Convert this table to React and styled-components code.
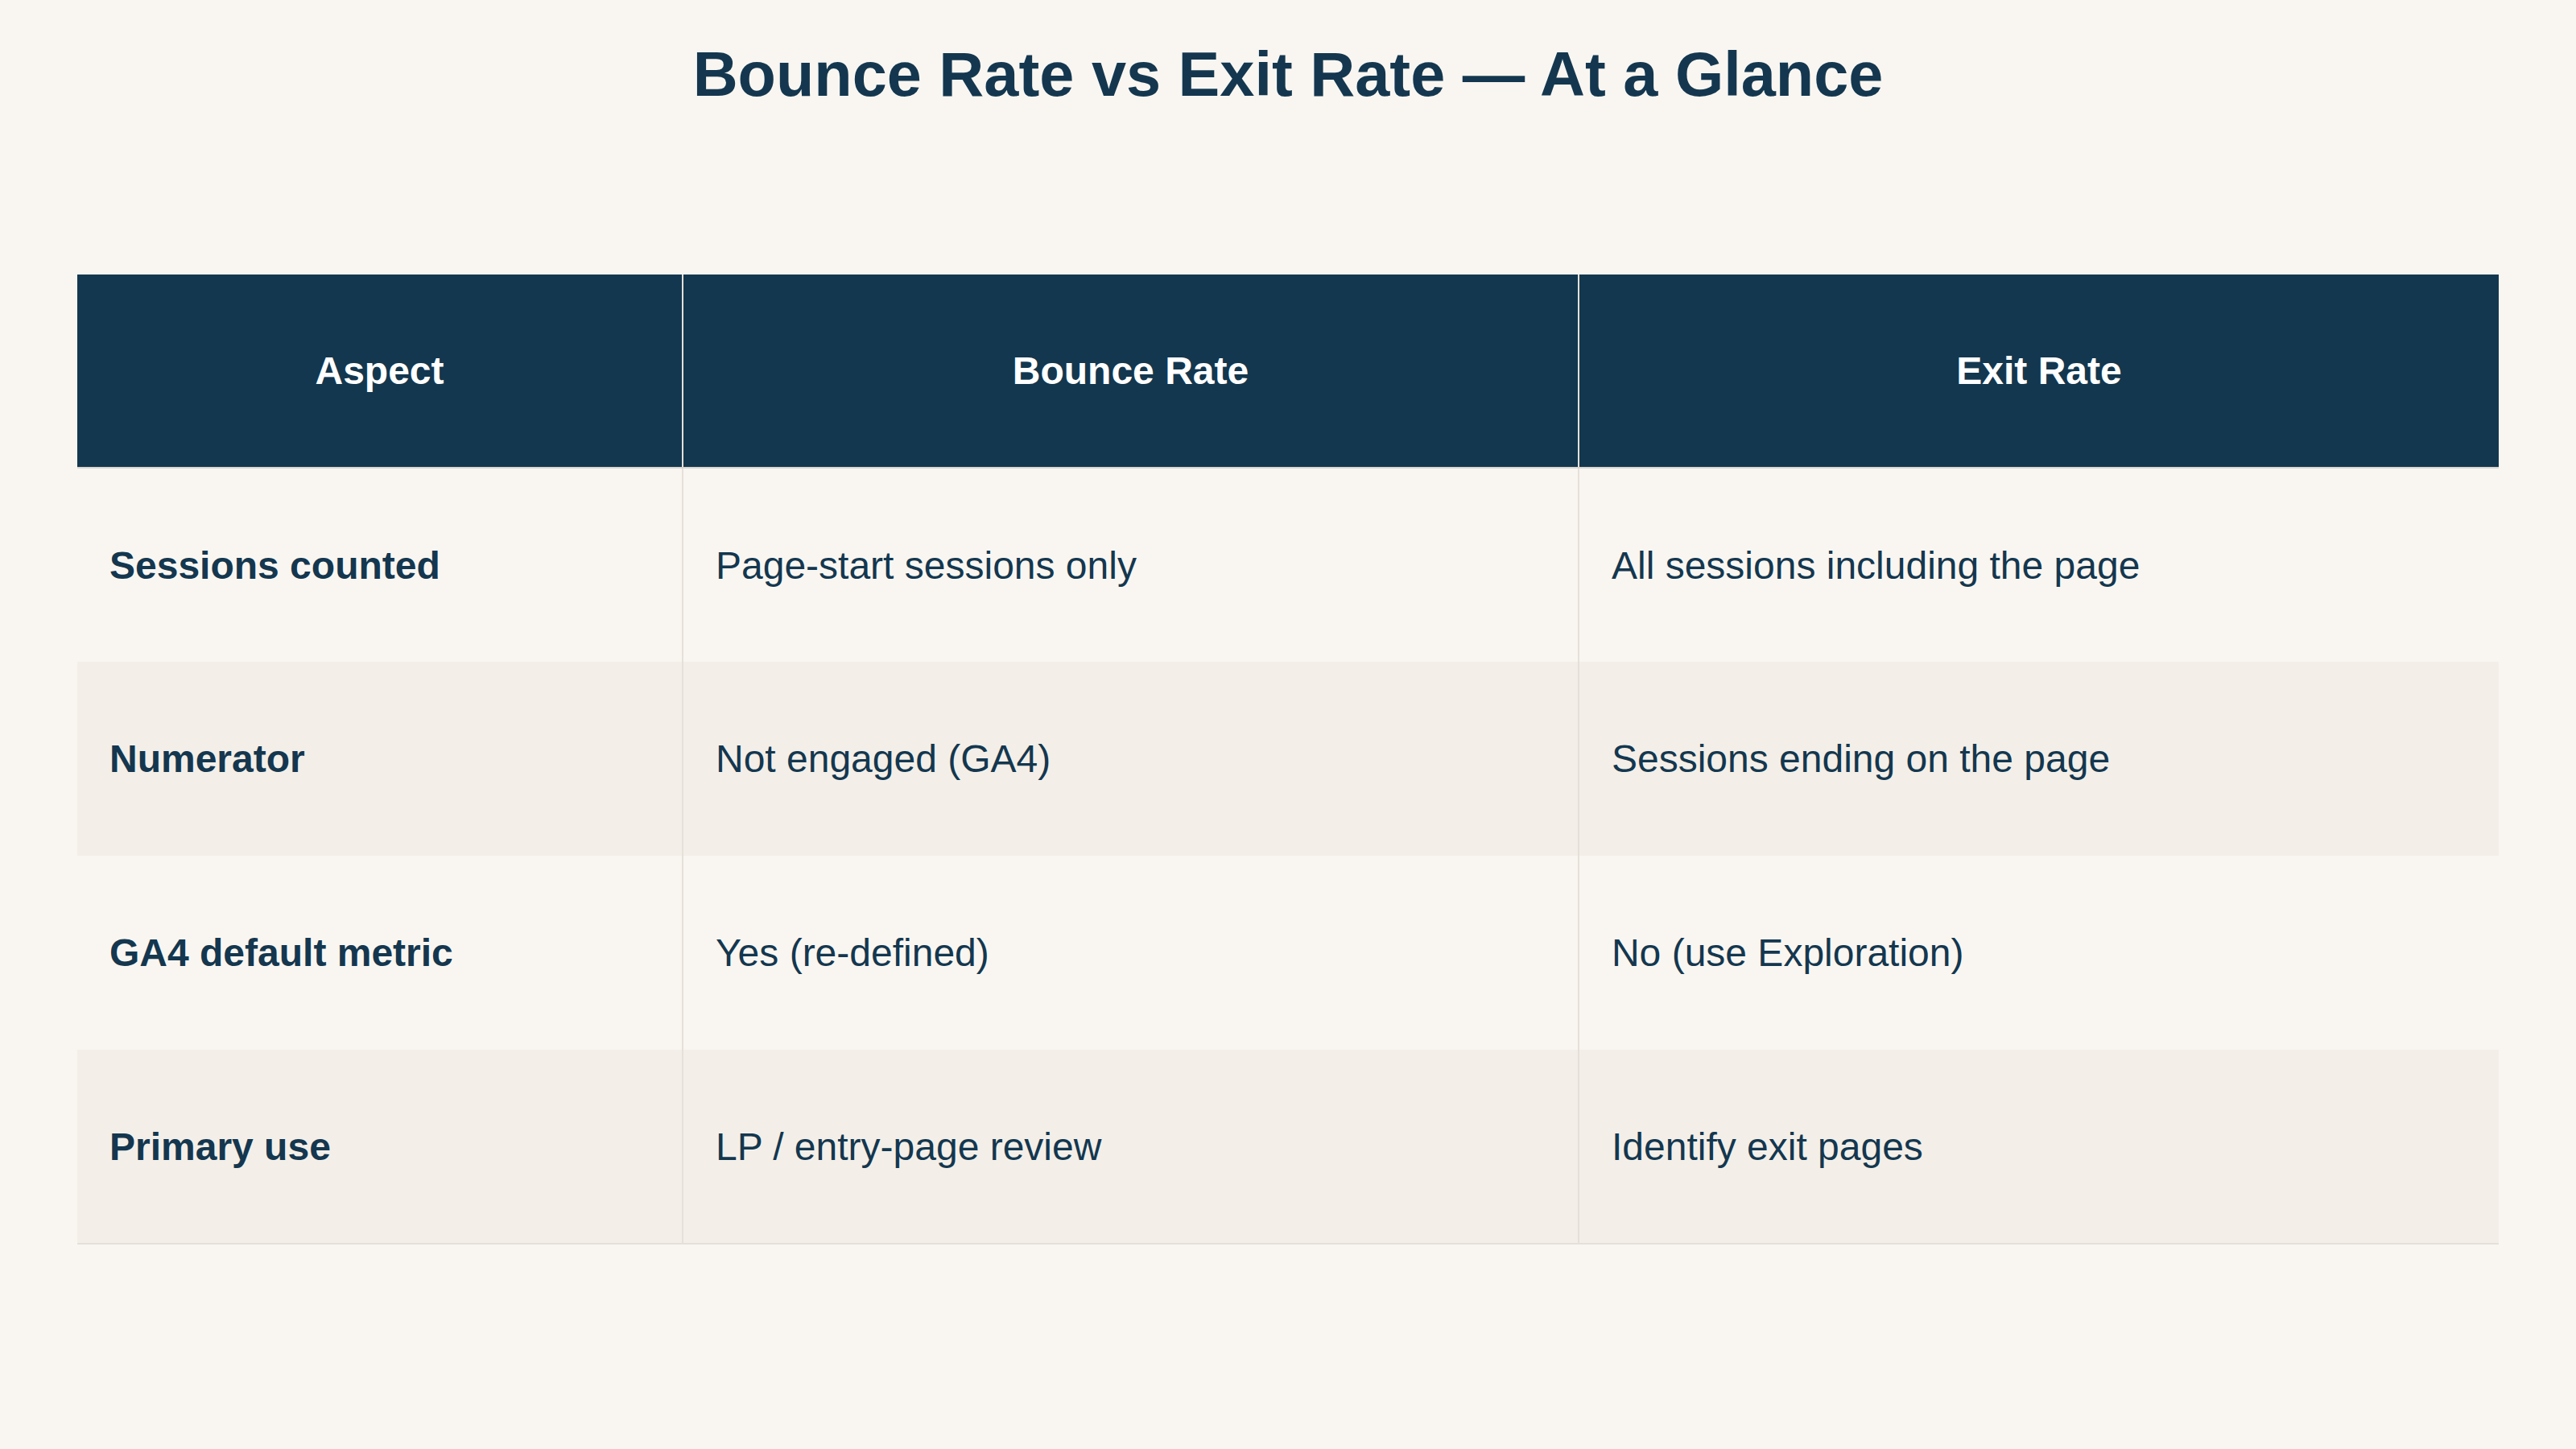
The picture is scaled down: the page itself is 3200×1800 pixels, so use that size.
import React from "react";
import styled, { createGlobalStyle } from "styled-components";

const Global = createGlobalStyle`
  html, body { margin: 0; padding: 0; background: #f9f6f1; }
  body { font-family: "Liberation Sans", Arial, Helvetica, sans-serif; color: #14374f; }
`;

const Page = styled.main`
  min-height: 1800px;
  box-sizing: border-box;
  padding: 48px 96px;
  background: #f9f6f1;
  display: flex;
  flex-direction: column;
`;

const Title = styled.h1`
  margin: 0;
  text-align: center;
  font-size: 77.5px;
  font-weight: 700;
  line-height: normal;
  color: #14374f;
`;

const Table = styled.table`
  margin-top: 204px;
  width: 100%;
  border-collapse: collapse;
  table-layout: fixed;
  font-size: 48px;
`;

const HeadCell = styled.th`
  height: 240px;
  box-sizing: border-box;
  padding: 0 40px;
  background: #13374f;
  color: #ffffff;
  font-weight: 700;
  text-align: center;
  vertical-align: middle;
  border-bottom: 2px solid #d9d5ce;
  border-right: ${(p) => (p.$last ? "none" : "2px solid #e5e0d8")};
`;

const Row = styled.tr`
  background: ${(p) => (p.$alt ? "#f3efe8" : "#f9f6f1")};
  border-bottom: ${(p) => (p.$last ? "2px solid #e5e0d8" : "none")};
`;

const Cell = styled.td`
  height: 241px;
  box-sizing: border-box;
  padding: 0 40px;
  vertical-align: middle;
  text-align: left;
  color: #14374f;
  font-weight: ${(p) => (p.$strong ? 700 : 400)};
  border-right: ${(p) => (p.$last ? "none" : "2px solid #e5e0d8")};
`;

const rows = [
  ["Sessions counted", "Page-start sessions only", "All sessions including the page"],
  ["Numerator", "Not engaged (GA4)", "Sessions ending on the page"],
  ["GA4 default metric", "Yes (re-defined)", "No (use Exploration)"],
  ["Primary use", "LP / entry-page review", "Identify exit pages"],
];

export default function App() {
  return (
    <>
      <Global />
      <Page>
        <Title>Bounce Rate vs Exit Rate — At a Glance</Title>
        <Table>
          <colgroup>
            <col style={{ width: "25%" }} />
            <col style={{ width: "37%" }} />
            <col style={{ width: "38%" }} />
          </colgroup>
          <thead>
            <tr>
              <HeadCell>Aspect</HeadCell>
              <HeadCell>Bounce Rate</HeadCell>
              <HeadCell $last>Exit Rate</HeadCell>
            </tr>
          </thead>
          <tbody>
            {rows.map((r, i) => (
              <Row key={i} $alt={i % 2 === 1} $last={i === rows.length - 1}>
                <Cell $strong>{r[0]}</Cell>
                <Cell>{r[1]}</Cell>
                <Cell $last>{r[2]}</Cell>
              </Row>
            ))}
          </tbody>
        </Table>
      </Page>
    </>
  );
}
